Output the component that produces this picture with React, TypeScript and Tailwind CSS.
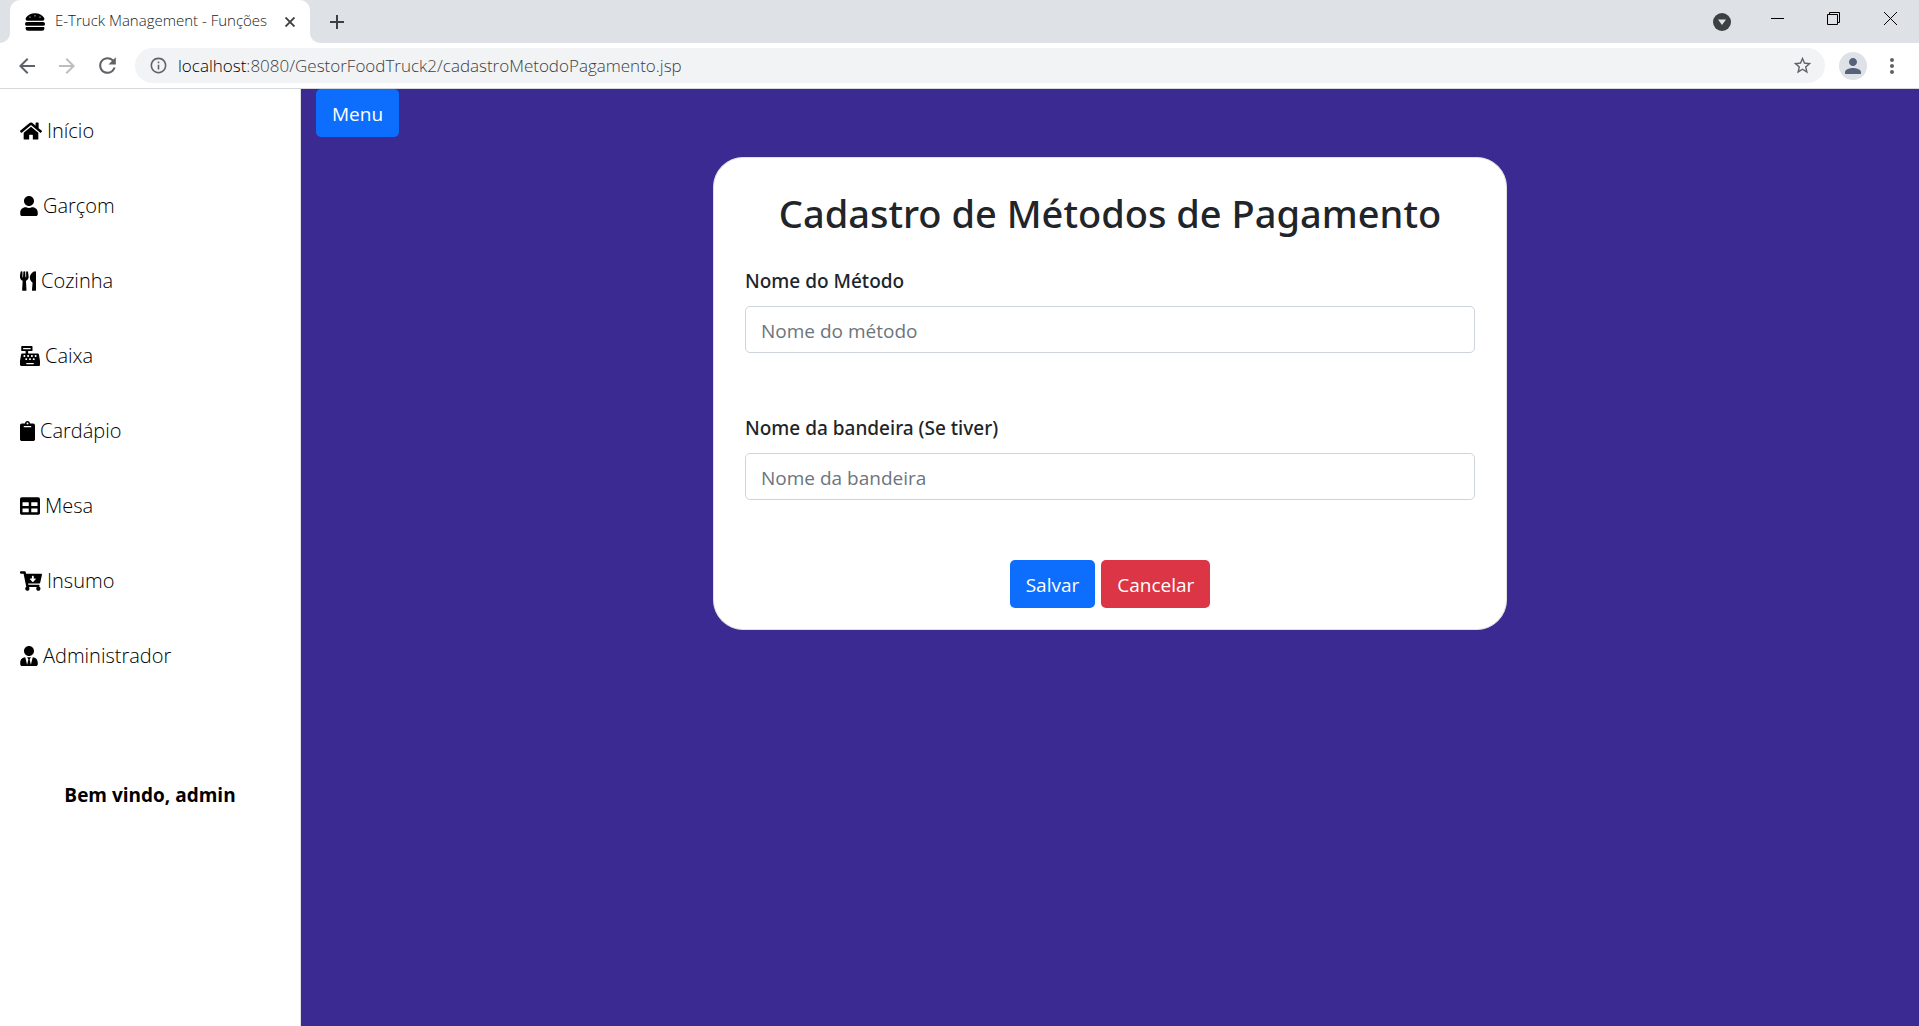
import type { ReactNode } from "react";
import type { IconType } from "react-icons";
import {
  FaCartArrowDown,
  FaCashRegister,
  FaClipboard,
  FaHamburger,
  FaHome,
  FaTable,
  FaUser,
  FaUserTie,
  FaUtensils,
} from "react-icons/fa";
import {
  MdAdd,
  MdArrowBack,
  MdArrowForward,
  MdInfoOutline,
  MdMoreVert,
  MdPerson,
  MdRefresh,
  MdStarBorder,
} from "react-icons/md";

const menuItems: { label: string; icon: IconType; width: string }[] = [
  { label: "Início", icon: FaHome, width: "w-[22px]" },
  { label: "Garçom", icon: FaUser, width: "w-[18px]" },
  { label: "Cozinha", icon: FaUtensils, width: "w-4" },
  { label: "Caixa", icon: FaCashRegister, width: "w-5" },
  { label: "Cardápio", icon: FaClipboard, width: "w-[15px]" },
  { label: "Mesa", icon: FaTable, width: "w-5" },
  { label: "Insumo", icon: FaCartArrowDown, width: "w-[22px]" },
  { label: "Administrador", icon: FaUserTie, width: "w-[18px]" },
];

function IconButton({ label, className = "", children }: { label: string; className?: string; children: ReactNode }) {
  return (
    <button type="button" aria-label={label} className={`flex items-center justify-center ${className}`}>
      {children}
    </button>
  );
}

function TabStrip() {
  return (
    <div className="flex h-[43px] items-stretch bg-[#dee1e6]">
      <div className="flex w-2.5 bg-white">
        <div className="flex-1 rounded-br-[10px] bg-[#dee1e6]" />
      </div>
      <div className="flex w-[300px] items-center rounded-t-[10px] bg-white pr-2.5 pl-[15px]">
        <FaHamburger className="size-5 text-black" />
        <span className="ml-2.5 flex-1 pb-0.5 text-[15px] font-light whitespace-nowrap text-[#202124]">
          E-Truck Management - Funções
        </span>
        <IconButton label="Fechar guia" className="size-5">
          <svg viewBox="0 0 10 10" className="size-2.5" stroke="#3c4043" strokeWidth="1.9" fill="none">
            <path d="M.5 .5l9 9M9.500 .5l-9 9" />
          </svg>
        </IconButton>
      </div>
      <div className="flex w-2.5 bg-white">
        <div className="flex-1 rounded-bl-[10px] bg-[#dee1e6]" />
      </div>
      <IconButton label="Nova guia" className="ml-[3px] w-7 text-[#3c4043]">
        <MdAdd className="size-6" />
      </IconButton>
      <div className="ml-auto flex pb-1">
        <IconButton label="Pesquisar guias" className="w-[57px] pt-1">
          <svg viewBox="0 0 18 18" className="size-[18px]">
            <circle cx="9" cy="9" r="9" fill="#3c4043" />
            <path d="M5 6.500h8L9 12z" fill="#dee1e6" />
          </svg>
        </IconButton>
        <IconButton label="Minimizar" className="w-[55px]">
          <svg viewBox="0 0 13 13" className="size-[13px]" stroke="#000" fill="none">
            <path d="M0 5.500h13" />
          </svg>
        </IconButton>
        <IconButton label="Restaurar" className="w-[57px] pb-0.5">
          <svg viewBox="0 0 13 13" className="size-[13px]" stroke="#000" fill="none">
            <path d="M.5 2.500h10v10H.5zM2.500 2.500v-2h10v10h-2" />
          </svg>
        </IconButton>
        <IconButton label="Fechar" className="w-[57px] pb-0.5">
          <svg viewBox="0 0 13 13" className="size-[13px]" stroke="#000" fill="none">
            <path d="M0 0l13 13M13 0L0 13" />
          </svg>
        </IconButton>
      </div>
    </div>
  );
}

function Toolbar() {
  return (
    <div className="flex h-[46px] items-center border-b border-[#d5d7da] bg-white px-[15px] text-[#5f6368]">
      <IconButton label="Voltar" className="w-6">
        <MdArrowBack className="size-6" />
      </IconButton>
      <IconButton label="Avançar" className="ml-4 w-6 text-[#bcbec1]">
        <MdArrowForward className="size-6" />
      </IconButton>
      <IconButton label="Atualizar" className="ml-4 w-6">
        <MdRefresh className="size-[25px] shrink-0" />
      </IconButton>
      <div className="ml-4 flex h-[35px] flex-1 items-center rounded-full bg-[#f1f3f4] px-3.5">
        <MdInfoOutline className="size-[19px]" />
        <div className="ml-2.5 flex-1 text-[17px] font-light whitespace-nowrap text-[#3c4043]">
          <span className="text-black">localhost</span>
          <span>:8080/GestorFoodTruck2/cadastroMetodoPagamento.jsp</span>
        </div>
        <IconButton label="Favoritar" className="w-[18px]">
          <MdStarBorder className="size-[21px] shrink-0" />
        </IconButton>
      </div>
      <IconButton label="Perfil" className="ml-3.5 size-7 rounded-full bg-[#dee1e6] text-[#56627a]">
        <MdPerson className="size-6" />
      </IconButton>
      <IconButton label="Mais opções" className="ml-[13px] w-6">
        <MdMoreVert className="size-6" />
      </IconButton>
    </div>
  );
}

function Sidebar() {
  return (
    <aside className="w-[301px] shrink-0 border-r border-[#dfdfdf] bg-white text-black">
      <nav className="flex flex-col pt-1">
        {menuItems.map(({ label, icon: Icon, width }) => (
          <a key={label} href="#" className="flex h-[75px] items-center gap-[5px] pl-5 text-[20px] font-light">
            <Icon className={`h-5 ${width}`} />
            {label}
          </a>
        ))}
      </nav>
      <p className="mt-[88px] text-center text-[19px] font-bold">Bem vindo, admin</p>
    </aside>
  );
}

function Field({ id, label, placeholder }: { id: string; label: string; placeholder: string }) {
  return (
    <div className="mb-[60px]">
      <label htmlFor={id} className="mb-2.5 block font-['Noto_Sans',sans-serif] text-[19px] leading-[30px] font-medium">
        {label}
      </label>
      <input
        id={id}
        type="text"
        placeholder={placeholder}
        className="block h-[47px] w-full rounded-[5px] border border-[#ced4da] bg-white px-[15px] pt-0.5 text-[19px] placeholder:text-[#6c757d]"
      />
    </div>
  );
}

export default function App() {
  return (
    <div className="flex min-h-screen flex-col font-['Open_Sans','Noto_Sans',sans-serif]">
      <header>
        <TabStrip />
        <Toolbar />
      </header>
      <div className="flex flex-1 items-stretch">
        <Sidebar />
        <main className="flex-1 bg-[#3a2a92] px-[15px]">
          <button type="button" className="block h-12 rounded-[5px] bg-[#0d6efd] px-4 pt-0.5 text-[19px] text-white">
            Menu
          </button>
          <form className="mx-auto mt-5 w-1/2 rounded-[30px] border border-[#dfdfdf] bg-white px-[31px] pt-[31px] pb-[21px] text-[#212529]">
            <h1 className="mb-[29px] text-center font-['Noto_Sans',sans-serif] text-[38px] leading-12 font-medium">
              Cadastro de Métodos de Pagamento
            </h1>
            <Field id="metodo" label="Nome do Método" placeholder="Nome do método" />
            <Field id="bandeira" label="Nome da bandeira (Se tiver)" placeholder="Nome da bandeira" />
            <div className="flex justify-center gap-1.5 text-[19px] text-white">
              <button type="submit" className="h-12 rounded-[5px] bg-[#0d6efd] px-4 pt-0.5">
                Salvar
              </button>
              <button type="button" className="h-12 rounded-[5px] bg-[#dc3545] px-4 pt-0.5">
                Cancelar
              </button>
            </div>
          </form>
        </main>
      </div>
    </div>
  );
}
